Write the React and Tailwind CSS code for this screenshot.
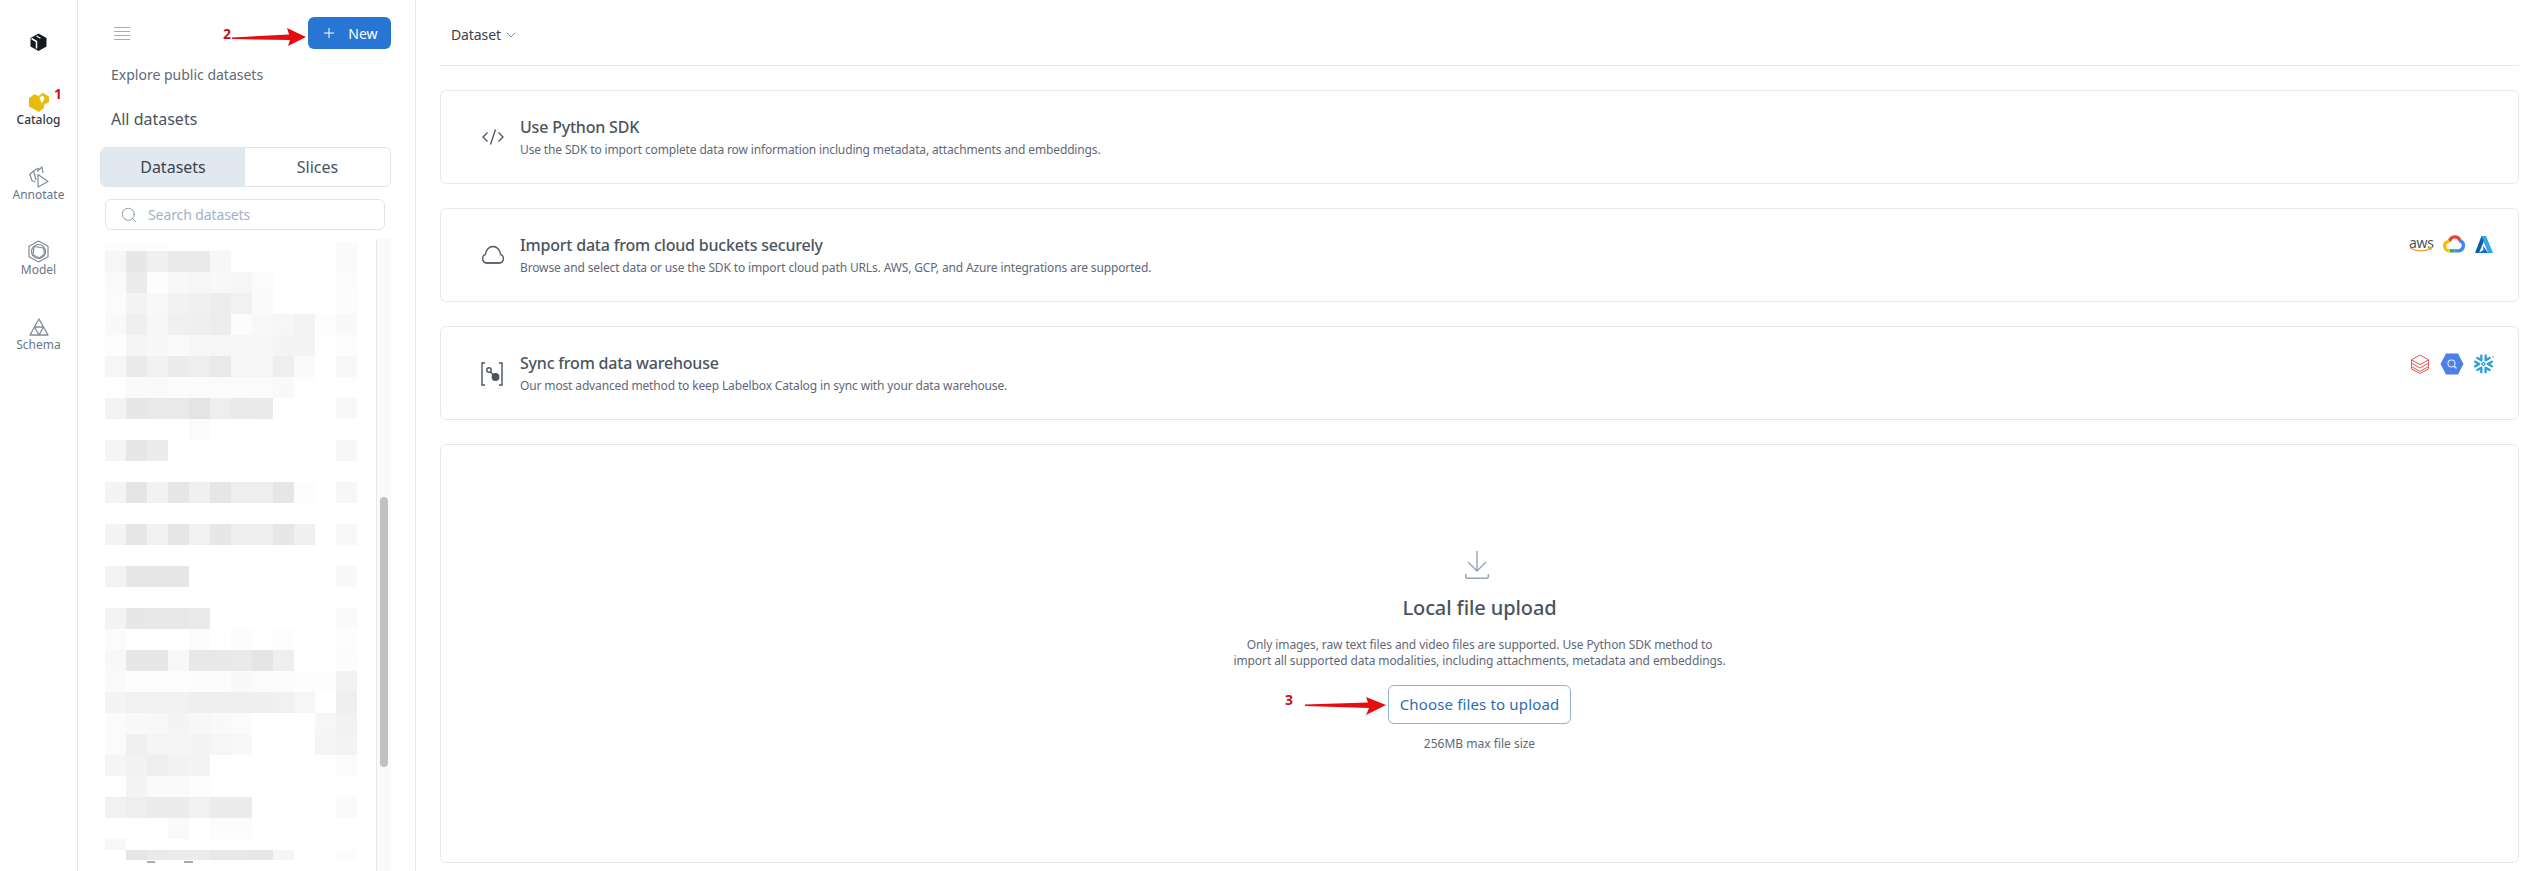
import { ChevronDown, Search, Plus } from 'lucide-react';
import { SiSnowflake } from 'react-icons/si';

const blurRows = [
    { h: 9, c: 'fc fc fd fe fe fe ff ff ff ff ff fb' },
    { h: 21, c: 'f6 e7 f0 ea ea f7 ff ff ff ff ff fa' },
    { h: 21, c: 'fa ec fd f8 f6 f8 f6 fb ff ff ff fb' },
    { h: 21, c: 'fb f4 f8 f2 f0 ed f1 fa ff ff ff fc' },
    { h: 21, c: 'f9 ef f7 f0 ef ed fc f8 f6 f3 fd f9' },
    { h: 21, c: 'fd f5 f7 fa f7 f6 f6 f6 f4 f4 fe fd' },
    { h: 21, c: 'f6 ea f2 ec ee e9 f6 f6 ee fa ff f8' },
    { h: 21, c: 'fe fa fa fc fb fb fb fb f9 fe ff fe' },
    { h: 21, c: 'f3 e7 e9 e9 e4 ee e9 ea ff ff ff f8' },
    { h: 21, c: 'ff ff ff ff fb ff ff ff ff ff ff ff' },
    { h: 21, c: 'f5 e7 ec ff ff ff ff ff ff ff ff f7' },
    { h: 21, c: 'ff ff ff ff ff ff ff ff ff ff ff ff' },
    { h: 21, c: 'f4 e5 f2 e6 f0 e6 ee ee e6 fd ff f7' },
    { h: 21, c: 'ff ff ff ff ff ff ff ff ff ff ff ff' },
    { h: 21, c: 'f4 e6 f2 e6 f1 e7 ee ee e7 f0 ff f8' },
    { h: 21, c: 'ff ff ff ff ff ff ff ff ff ff ff ff' },
    { h: 21, c: 'f3 e7 e6 e6 ff ff ff ff ff ff ff f9' },
    { h: 21, c: 'ff fe ff ff ff ff ff ff ff ff ff ff' },
    { h: 21, c: 'f3 e7 e8 e8 ea ff ff ff ff ff ff fa' },
    { h: 21, c: 'fb fe fe fe fb ff fc ff fd ff ff fd' },
    { h: 21, c: 'f8 e7 e7 f8 e8 e8 ea e5 ef ff ff fc' },
    { h: 21, c: 'fa fd fd fd fc fc f9 fb fc fd fd f2' },
    { h: 21, c: 'f4 f1 f1 f1 ef ef ef ef f1 f6 ff ee' },
    { h: 21, c: 'fb f9 f8 f4 f7 f9 fb ff ff ff f6 f2' },
    { h: 21, c: 'fb f0 f5 f5 f4 f6 f8 ff ff ff f5 f3' },
    { h: 21, c: 'f5 f2 ee f2 f4 ff ff ff ff ff ff fb' },
    { h: 21, c: 'fe f4 fa fa fd ff ff ff ff ff ff fe' },
    { h: 21, c: 'f1 ee eb ec f1 ec ec ff ff ff ff fa' },
    { h: 21, c: 'ff fe fe fa ff fc fc ff ff ff ff ff' },
    { h: 11, c: 'f8 ff ff ff ff ff ff ff ff ff ff fe' },
    { h: 10, c: 'ff e6 ea ec ec e8 e8 e7 f5 ff ff fc' },
];

function LogoMark() {
    return (
        <svg width="17" height="18" viewBox="0 0 17 18">
            <path d="M8.500.5l8 4.500v8.500l-8 4.500-8-4.500V5z" fill="#16191d" />
            <path d="M1.500 5.500L6.500 8.500v7" fill="none" stroke="#fff" strokeWidth="1.500" />
            <path d="M6.500 3l4 2.300" fill="none" stroke="#fff" strokeWidth="1.200" />
        </svg>
    );
}

function CatalogIcon() {
    return (
        <svg width="20" height="20" viewBox="0 0 20 20">
            <path d="M0 6l5.500-3.800L9.500 4 14 .8l6 3.700V10l-5 2.800V16l-5 4-10-5.500z" fill="#e9bb0c" />
            <path d="M10.500 5.200L14 3.600l1.500 3-2.500 4.600-2-3.700z" fill="#fff" />
        </svg>
    );
}

function AnnotateIcon() {
    return (
        <svg width="20" height="22" viewBox="0 0 20 22" fill="none" stroke="#808b99" strokeWidth="1.200" strokeLinejoin="round">
            <path d="M4.500 5L.8 8.500 3 14.500l3.500 1.500" />
            <path d="M4.500 5l4.500-2.800 1 1.800" />
            <path d="M8 5.500L13 1l1 6" />
            <path d="M4.500 5L7 14" />
            <path d="M9 8.500v12.500l10-5.500z" />
        </svg>
    );
}

function ModelIcon() {
    return (
        <svg width="21" height="23" viewBox="0 0 21 23" fill="none" stroke="#808b99" strokeWidth="1.200" strokeLinejoin="round">
            <path d="M10.500 1l9.500 5.300v10.400L10.500 22 1 16.700V6.300z" />
            <circle cx="10.500" cy="11.500" r="7" />
            <path d="M6 6.500l9.500 1.500 1 6-5 4-6.500-3z" />
        </svg>
    );
}

function SchemaIcon() {
    return (
        <svg width="20" height="18" viewBox="0 0 20 18" fill="none" stroke="#808b99" strokeWidth="1.300" strokeLinejoin="round">
            <path d="M10 1l9 16H1z" />
            <path d="M5.500 9h9L10 17z" />
        </svg>
    );
}

function NavItem({ icon, label, active }) {
    return (
        <div className="flex h-[75px] w-full flex-col items-center">
            <div className="flex h-[21px] items-center justify-center">{icon}</div>
            <span className={`text-[12px] leading-[16px] ${active ? 'font-medium text-[#2f3742]' : 'text-[#6b7686]'}`}>{label}</span>
        </div>
    );
}

function CodeIcon() {
    return (
        <svg width="24" height="24" viewBox="0 0 24 24" fill="none" stroke="#4a5462" strokeWidth="1.300">
            <path d="M6.500 7.500L2 12l4.500 4.500M17.500 7.500L22 12l-4.500 4.500M14.500 4.500l-5 15" />
        </svg>
    );
}

function CloudIcon() {
    return (
        <svg width="24" height="24" viewBox="0 0 24 24" fill="none" stroke="#4a5462" strokeWidth="1.300">
            <path d="M6 20h12a4.500 4.500 0 0 0 1.500-8.700C19 7 16 3.500 12 3.500S5 7 4.500 11.300A4.500 4.500 0 0 0 6 20z" />
            <path d="M1.800 17.500c1 1.500 2.500 2.500 4.200 2.500h12c1.700 0 3.200-1 4.200-2.500" strokeWidth="1" />
        </svg>
    );
}

function SyncIcon() {
    return (
        <svg className="-ml-[2px] mt-[2px]" width="24" height="28" viewBox="0 0 24 28" fill="none" stroke="#4a5462" strokeWidth="1.400">
            <path d="M5 3H2v22h3M19 3h3v22h-3" />
            <circle cx="9" cy="10" r="2.200" />
            <circle cx="15.500" cy="17" r="3.200" fill="#4a5462" />
            <path d="M10.500 12l3 3" />
        </svg>
    );
}

function AwsLogo() {
    return (
        <div className="relative h-[17px] w-[24px]">
            <span className="block text-center text-[14px] leading-[13px] tracking-[-0.3px] text-[#4a5462]">aws</span>
            <svg className="absolute left-0 top-[10px]" width="24" height="7" viewBox="0 0 24 7" fill="none" stroke="#f29a17" strokeWidth="1.300">
                <path d="M1 1.500c6 4.500 15 4.500 21 .5M19.500 1.500l3 0-1 2.500" />
            </svg>
        </div>
    );
}

function GcpLogo() {
    return (
        <svg width="22" height="18" viewBox="0 0 21 17" fill="none" strokeWidth="3.200">
            <path d="M6 6c.8-2.500 2.500-4.200 5-4.300 2.700-.1 4.600 1.500 5.300 3.800" stroke="#ea4335" />
            <path d="M15.500 5.500c2.600.4 4 2.200 4 4.300 0 2.700-2 5.200-4.500 5.200H11" stroke="#4285f4" />
            <path d="M11 15H6.500" stroke="#34a853" />
            <path d="M6.500 15C3.500 15 1.500 12.800 1.500 10.300c0-2.400 1.900-4.300 4.500-4.300" stroke="#fbbc05" />
        </svg>
    );
}

function AzureLogo() {
    return (
        <svg width="18" height="17" viewBox="0 0 18 17">
            <path d="M6.500 0h4.500L4 17H0z" fill="#0a5ea8" />
            <path d="M6.500 0H11l7 17h-5z" fill="#35a5ea" />
            <path d="M8 9.500l5 7.500H3.500L8.500 14z" fill="#0f6cc0" />
        </svg>
    );
}

function DatabricksLogo() {
    return (
        <svg width="20" height="20" viewBox="0 0 20 20" fill="none" stroke="#e45a4e" strokeWidth="1">
            <path d="M10 1l8.500 4.800L10 10.600 1.500 5.800z" />
            <path d="M1.500 5.800v3.400l8.500 4.800 8.500-4.800V5.800" />
            <path d="M1.500 9.200v3.400l8.500 4.800 8.500-4.800V9.200" />
            <path d="M1.500 12.600v2.400l8.500 4.500 8.500-4.500v-2.400" />
        </svg>
    );
}

function BigQueryLogo() {
    return (
        <svg width="24" height="22" viewBox="0 0 24 22">
            <path d="M6 .5h12L23.500 11 18 21.500H6L.5 11z" fill="#4c80e4" />
            <circle cx="11.500" cy="10.500" r="3.500" fill="none" stroke="#dce8ff" strokeWidth="1.100" />
            <path d="M14 13l2.500 2.500" stroke="#dce8ff" strokeWidth="1.300" />
        </svg>
    );
}

function OptionCard({ icon, title, description, logos }) {
    return (
        <div className="flex h-[94px] items-center rounded-[6px] border border-[#e6eaef] pl-[40px] pr-[24px]">
            <div className="flex w-[24px] shrink-0 justify-center">{icon}</div>
            <div className="ml-[15px]">
                <h3 className="text-[16px] font-medium leading-[24px] tracking-[-0.2px] text-[#4a5462]">{title}</h3>
                <p className="mt-[2px] text-[12px] leading-[18px] tracking-[-0.14px] text-[#5f6977]">{description}</p>
            </div>
            {logos && <div className="ml-auto flex items-center gap-[10px] self-start pt-[26px]">{logos}</div>}
        </div>
    );
}

export default function App() {
    return (
        <div className="relative flex h-[871px] w-[2527px] overflow-hidden bg-white font-['Noto_Sans',sans-serif]">
            {/* Left nav */}
            <aside className="flex w-[78px] shrink-0 flex-col items-center border-r border-[#e6eaef]">
                <div className="flex h-[91px] w-full justify-center pt-[33px]">
                    <LogoMark />
                </div>
                <NavItem icon={<CatalogIcon />} label="Catalog" active />
                <NavItem icon={<AnnotateIcon />} label="Annotate" />
                <NavItem icon={<ModelIcon />} label="Model" />
                <NavItem icon={<SchemaIcon />} label="Schema" />
            </aside>

            {/* Dataset list */}
            <section className="flex w-[338px] shrink-0 flex-col border-r border-[#e6eaef] pl-[22px] pr-[24px] pt-[17px]">
                <div className="flex items-center justify-between">
                    <svg className="ml-[14px]" width="16" height="13" viewBox="0 0 16 13" stroke="#9fb0c4" strokeWidth="1">
                        <path d="M0 .5h16M0 4.500h16M0 8.500h16M0 12.500h16" />
                    </svg>
                    <button className="flex h-[32px] w-[83px] items-center justify-center gap-[11px] rounded-[6px] bg-[#2876d4] text-[14px] text-white">
                        <Plus size={16} strokeWidth={1.5} />
                        <span>New</span>
                    </button>
                </div>
                <p className="ml-[11px] mt-[16px] text-[14px] leading-[20px] text-[#5f6977]">Explore public datasets</p>
                <h2 className="ml-[11px] mt-[22px] text-[16px] leading-[24px] text-[#4a5462]">All datasets</h2>

                <div className="mt-[16px] flex h-[40px] overflow-hidden rounded-[6px] border border-[#dfe4ea] text-[16px]">
                    <div className="flex w-[144px] items-center justify-center bg-[#e2e8f0] text-[#3a4350]">Datasets</div>
                    <div className="flex flex-1 items-center justify-center text-[#4a5462]">Slices</div>
                </div>

                <div className="ml-[5px] mr-[6px] mt-[12px] flex h-[31px] items-center gap-[10px] rounded-[6px] border border-[#dfe4ea] pl-[14px]">
                    <Search size={18} strokeWidth={1.2} className="text-[#7e8ea3]" />
                    <span className="text-[14px] tracking-[-0.1px] text-[#a3b1c4]">Search datasets</span>
                </div>

                {/* Blurred rows + scrollbar */}
                <div className="mt-[9px] flex flex-1">
                    <div className="ml-[5px] w-[271px] pt-[3px]">
                        {blurRows.map((row, i) => (
                            <div key={i} className="flex" style={{ height: row.h }}>
                                {row.c.split(' ').map((g, j) => (
                                    <div key={j} className="h-full w-[21px]" style={{ backgroundColor: `#${g}${g}${g}` }} />
                                ))}
                            </div>
                        ))}
                        <div className="mt-[1px] flex h-[2px] pl-[42px]">
                            <div className="h-full w-[8px] bg-[#aaaaaa]" />
                            <div className="ml-[29px] h-full w-[9px] bg-[#aaaaaa]" />
                        </div>
                    </div>
                    <div className="w-[15px] border-l border-[#e8e8e8] bg-[#fafafa] pl-[3px] pt-[258px]">
                        <div className="h-[270px] w-[8px] rounded-full bg-[#c1c1c1]" />
                    </div>
                </div>
            </section>

            {/* Main */}
            <main className="flex min-w-0 flex-1 flex-col pl-[24px] pr-[8px]">
                <header className="flex h-[66px] shrink-0 items-start gap-[2px] border-b border-[#e6eaef] pl-[11px] pt-[25px]">
                    <span className="text-[14px] leading-[20px] tracking-[-0.1px] text-[#3a4350]">Dataset</span>
                    <ChevronDown size={16} strokeWidth={1.4} className="mt-[2px] text-[#6f89a6]" />
                </header>

                <div className="mt-[24px] flex flex-col gap-[24px]">
                    <OptionCard
                        icon={<CodeIcon />}
                        title="Use Python SDK"
                        description="Use the SDK to import complete data row information including metadata, attachments and embeddings."
                    />
                    <OptionCard
                        icon={<CloudIcon />}
                        title="Import data from cloud buckets securely"
                        description="Browse and select data or use the SDK to import cloud path URLs. AWS, GCP, and Azure integrations are supported."
                        logos={<><AwsLogo /><GcpLogo /><div className="mr-[1px]"><AzureLogo /></div></>}
                    />
                    <OptionCard
                        icon={<SyncIcon />}
                        title="Sync from data warehouse"
                        description="Our most advanced method to keep Labelbox Catalog in sync with your data warehouse."
                        logos={<><DatabricksLogo /><BigQueryLogo /><SiSnowflake size={20} className="text-[#2a9fd8]" /></>}
                    />
                </div>

                {/* Local upload */}
                <div className="mt-[24px] flex h-[419px] flex-col items-center rounded-[6px] border border-[#e6eaef] pt-[106px]">
                    <svg className="-ml-[6px]" width="24" height="28" viewBox="0 0 24 28" fill="none" stroke="#8fa3bb" strokeWidth="1.400">
                        <path d="M12 0v20M3 11l9 9 9-9M.7 23v2.500c0 1 .8 1.800 1.800 1.800h19c1 0 1.800-.8 1.800-1.800V23" />
                    </svg>
                    <h2 className="mt-[15px] text-[20px] font-medium leading-[28px] tracking-[-0.1px] text-[#4a5462]">Local file upload</h2>
                    <p className="mt-[15px] text-center text-[12px] leading-[16px] tracking-[-0.1px] text-[#5f6977]">
                        Only images, raw text files and video files are supported. Use Python SDK method to
                        <br />
                        import all supported data modalities, including attachments, metadata and embeddings.
                    </p>
                    <button className="mt-[16px] h-[39px] w-[183px] rounded-[6px] border border-[#8fb2da] text-[15px] tracking-[0.15px] text-[#2b6cb8]">Choose files to upload</button>
                    <p className="mt-[12px] text-[12px] leading-[16px] text-[#5f6977]">256MB max file size</p>
                </div>
            </main>

            {/* Red annotations over the shot */}
            <span className="absolute left-[54px] top-[85px] text-[14px] font-bold leading-[18px] text-[#d0101f]">1</span>
            <span className="absolute left-[223px] top-[25px] text-[14px] font-bold leading-[18px] text-[#c81018]">2</span>
            <svg className="absolute left-[230px] top-[26px]" width="78" height="22" viewBox="0 0 78 22">
                <path d="M2 11.500L59 8.500 57 2l19 9-18 9 2-6L2 13z" fill="#e50d0d" />
            </svg>
            <span className="absolute left-[1285px] top-[691px] text-[14px] font-bold leading-[18px] text-[#c81018]">3</span>
            <svg className="absolute left-[1303px] top-[695px]" width="86" height="22" viewBox="0 0 86 22">
                <path d="M2 9.500L65 7.500 63 2l20 8-20 10 3-7L2 11z" fill="#e50d0d" />
            </svg>
        </div>
    );
}
